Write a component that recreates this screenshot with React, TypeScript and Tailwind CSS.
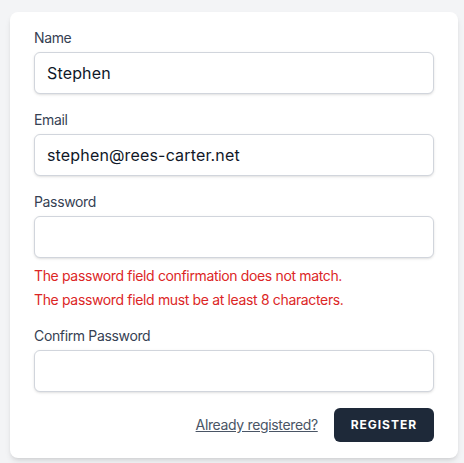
import { JSX } from 'react'

function Field({
  label,
  type = 'text',
  value,
  errors
}: {
  label: string
  type?: string
  value?: string
  errors?: string[]
}): JSX.Element {
  return (
    <div>
      <label className="block text-sm font-normal leading-5 tracking-tight text-gray-700">{label}</label>
      <input
        type={type}
        defaultValue={value}
        className="mt-1 block w-full rounded-md border border-gray-300 bg-white px-3 py-2 text-base leading-6 tracking-[0.01em] text-gray-900 shadow-sm outline-none"
      />
      {errors && (
        <ul className="mt-2 space-y-1 text-sm leading-5 tracking-tight text-[#dc2626]">
          {errors.map((e) => (
            <li key={e}>{e}</li>
          ))}
        </ul>
      )}
    </div>
  )
}

export default function App(): JSX.Element {
  return (
    <div
      className="min-h-[463px] w-full bg-gray-100 pl-[10px] pt-3"
      style={{ fontFamily: 'Inter, "Noto Sans", sans-serif' }}
    >
      <div className="w-[448px] rounded-lg bg-white px-6 py-4 shadow-md">
        <form className="flex flex-col gap-4">
          <Field label="Name" value="Stephen" />
          <Field label="Email" type="email" value="stephen@rees-carter.net" />
          <Field
            label="Password"
            type="password"
            errors={[
              'The password field confirmation does not match.',
              'The password field must be at least 8 characters.'
            ]}
          />
          <Field label="Confirm Password" type="password" />
          <div className="flex items-center justify-end">
            <a href="#" className="rounded-md text-sm leading-5 tracking-tight text-gray-600 underline">
              Already registered?
            </a>
            <button
              type="button"
              className="ml-4 inline-flex items-center rounded-md border border-transparent bg-gray-800 px-4 py-2 text-xs font-bold uppercase leading-4 tracking-[0.08em] text-white"
            >
              Register
            </button>
          </div>
        </form>
      </div>
    </div>
  )
}
